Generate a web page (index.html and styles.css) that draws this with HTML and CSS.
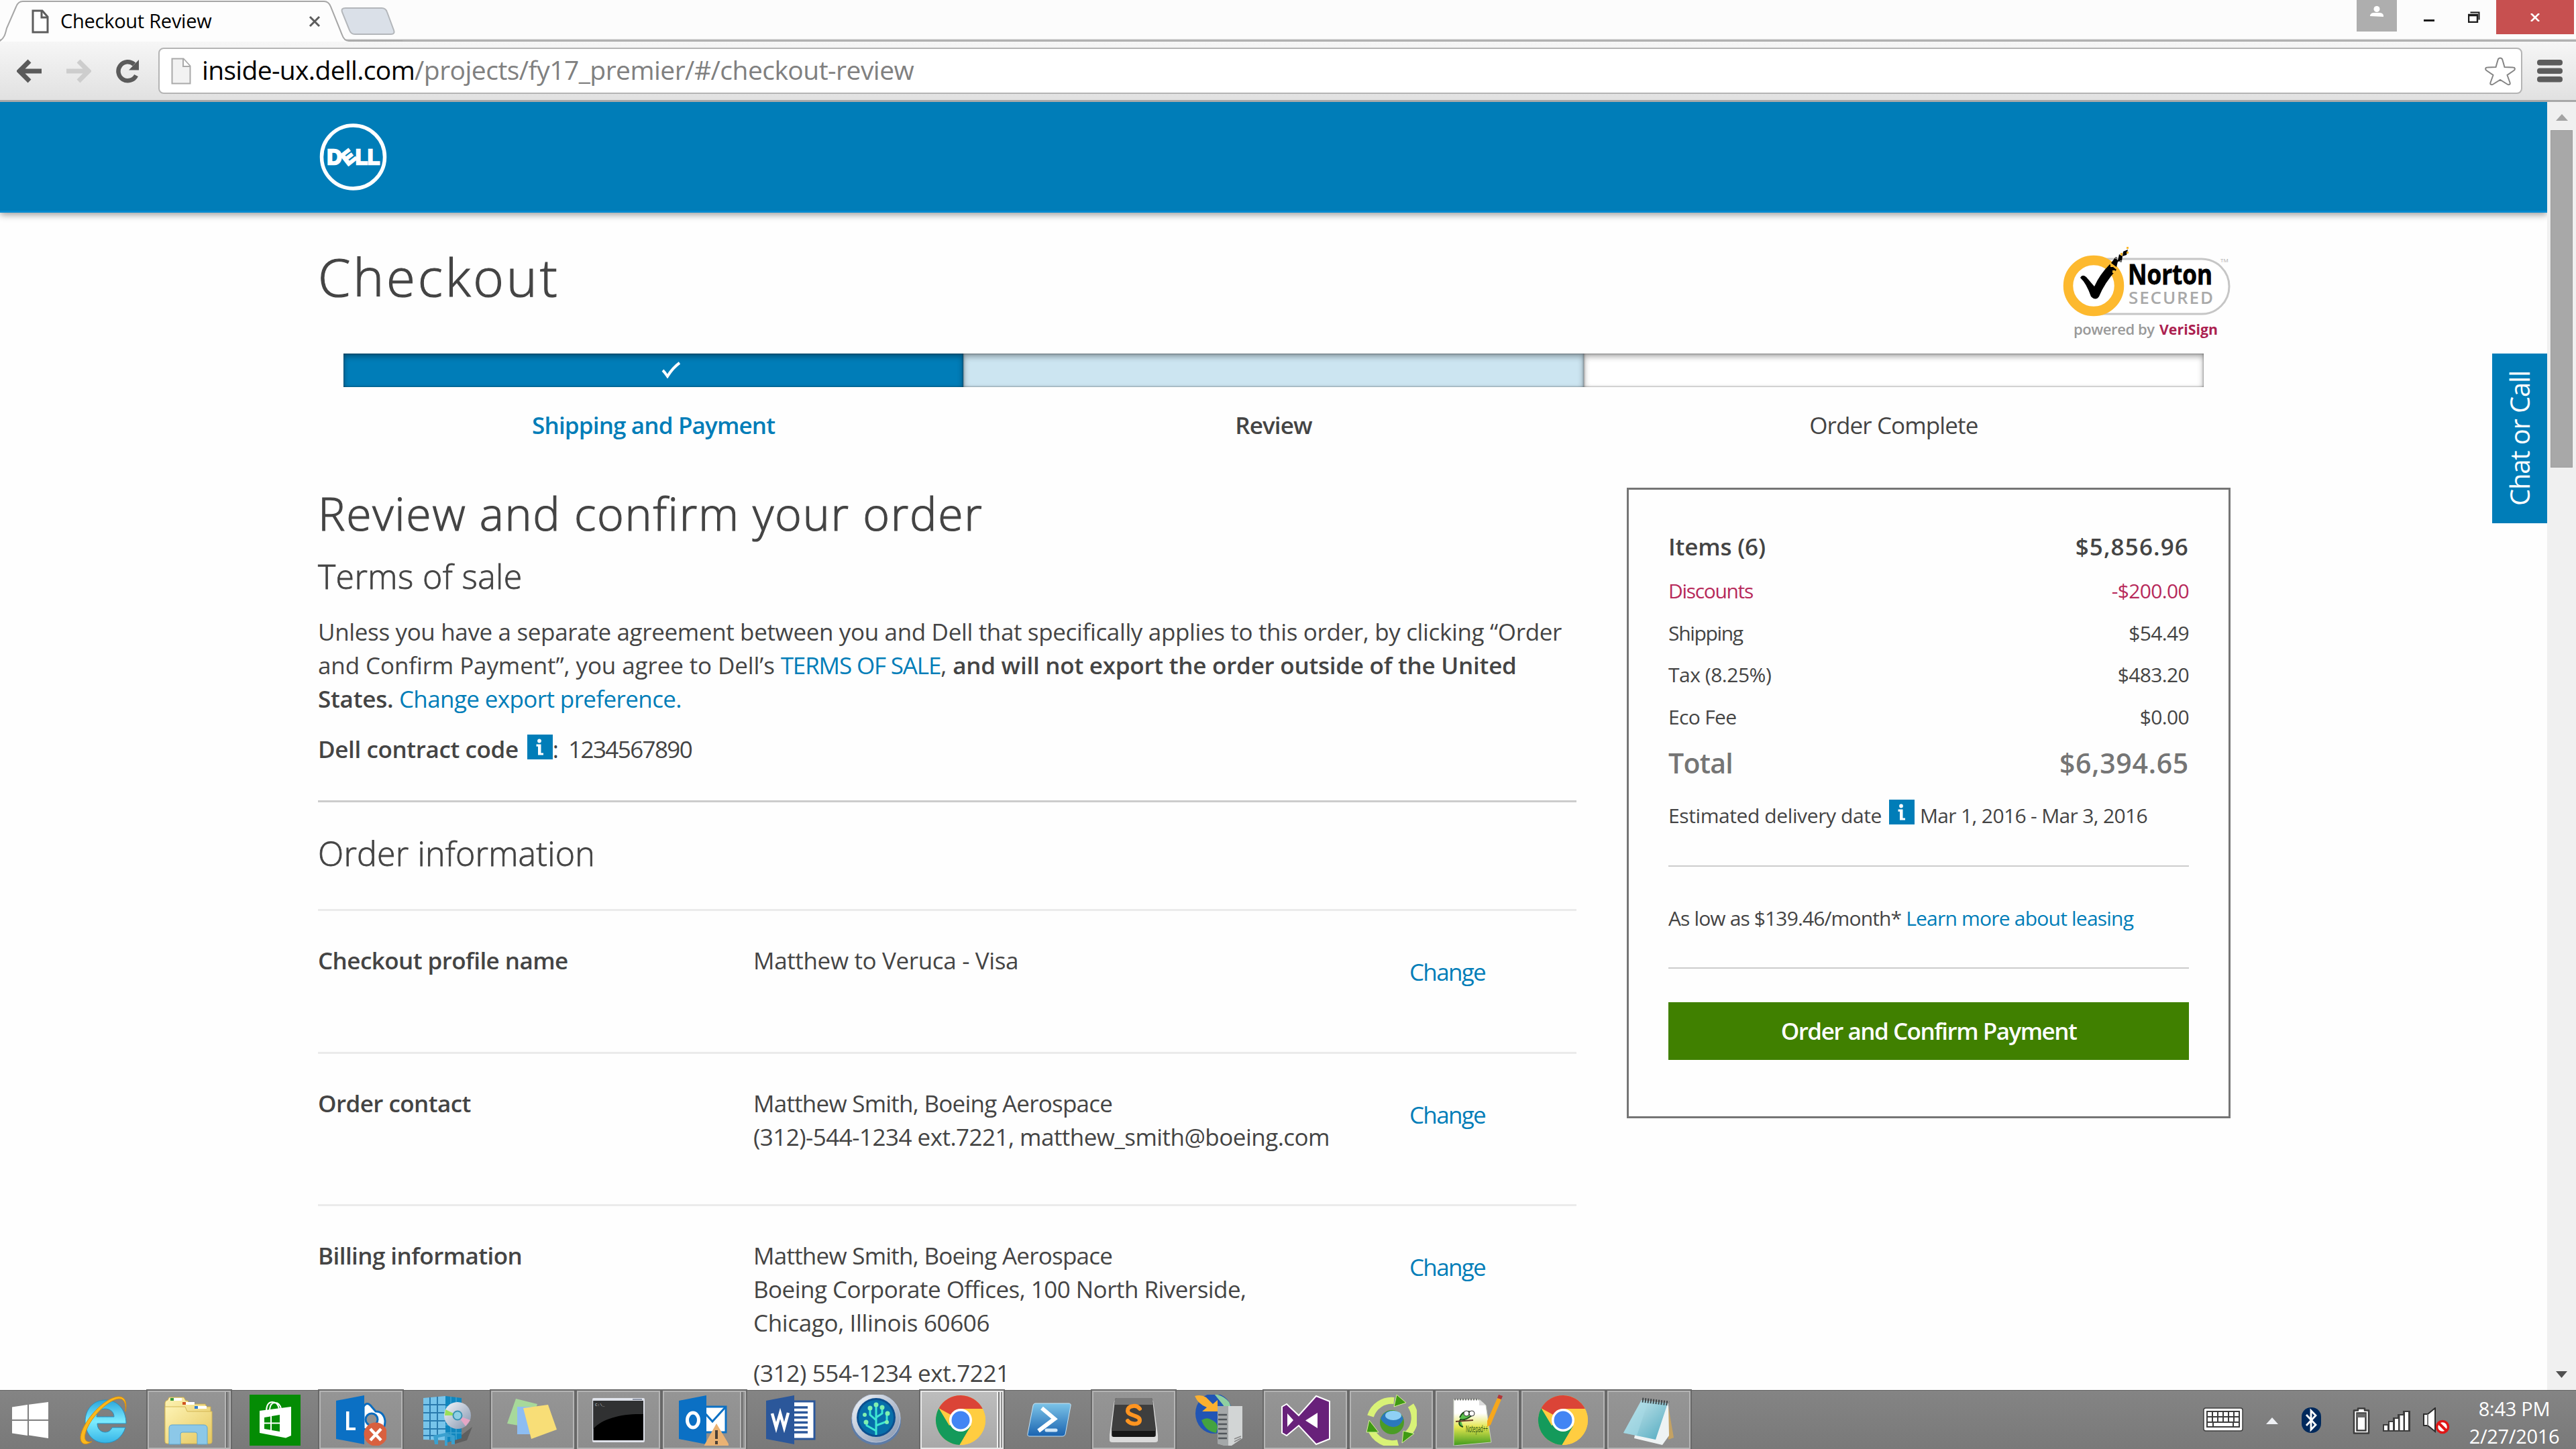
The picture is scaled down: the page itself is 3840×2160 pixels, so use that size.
FILE: index.html
```html
<!DOCTYPE html>
<html lang="en">
<head>
<meta charset="utf-8">
<title>Checkout Review</title>
<link rel="stylesheet" href="styles.css">
</head>
<body>
<svg width="0" height="0" class="defs" aria-hidden="true">
  <defs>
    <linearGradient id="g-ie" x1="0" y1="0" x2="0" y2="1"><stop offset="0" stop-color="#2ba6dc"/><stop offset=".5" stop-color="#7cecff"/><stop offset="1" stop-color="#35b4e6"/></linearGradient>
    <linearGradient id="g-fold" x1="0" y1="0" x2="1" y2="1"><stop offset="0" stop-color="#fdf3b4"/><stop offset="1" stop-color="#e5c75e"/></linearGradient>
    <linearGradient id="g-blue" x1="0" y1="0" x2="0" y2="1"><stop offset="0" stop-color="#7cc4e8"/><stop offset="1" stop-color="#1a63b0"/></linearGradient>
    <linearGradient id="g-silver" x1="0" y1="0" x2="1" y2="1"><stop offset="0" stop-color="#f4f7fb"/><stop offset="1" stop-color="#8292ac"/></linearGradient>
    <linearGradient id="g-note" x1="0" y1="0" x2="1" y2="1"><stop offset="0" stop-color="#d5eef2"/><stop offset="1" stop-color="#4fa9bf"/></linearGradient>
    <linearGradient id="g-npp" x1="0" y1="0" x2="0" y2="1"><stop offset="0" stop-color="#fff"/><stop offset=".3" stop-color="#fff"/><stop offset=".6" stop-color="#e4e64e"/><stop offset="1" stop-color="#3f9a1e"/></linearGradient>
    <linearGradient id="g-arrow" x1="0" y1="0" x2="1" y2="1"><stop offset="0" stop-color="#f2fcae"/><stop offset="1" stop-color="#86c81c"/></linearGradient>
    <symbol id="chrome" viewBox="0 0 76 76">
      <circle cx="38" cy="38" r="37" fill="#ffcd41"/>
      <path d="M38 38 5.500 20.200A37 37 0 0 1 70.800 21H38z" fill="#db4437"/>
      <path d="M5.500 20.200A37 37 0 0 0 36.500 75L53 47 38 38 21 46z" fill="#149a5b"/>
      <path d="M53 47 36.500 75A37 37 0 0 0 70.800 21H38z" fill="#ffcd41"/>
      <circle cx="38" cy="38" r="17" fill="#fff"/>
      <circle cx="38" cy="38" r="13.500" fill="#4285f4"/>
    </symbol>
    <symbol id="info" viewBox="0 0 38 37">
      <rect width="38" height="37" fill="#007db8"/>
      <circle cx="18" cy="9.500" r="2.900" fill="#fff"/>
      <path d="M13.500 14.500h7v13h3.500v3h-8v-12.800h-2.500z" fill="#fff"/>
    </symbol>
  </defs>
</svg>

<div class="tabstrip">
  <svg class="tab-shape" width="600" height="62" viewBox="0 0 600 62">
    <path d="M0 62C7 56 8 50 10 42L24 10Q27 2 34 2H483Q490 2 493 10L510 52Q513 61 520 61V62z" fill="#fdfdfd"/>
    <path d="M0 61C7 56 8 50 10 42L24 10Q27 2 34 2H483Q490 2 493 10L510 52Q513 61 520 61H600" fill="none" stroke="#a6a6a6" stroke-width="2"/>
    <path d="M515 12h54q6 0 8 6l10 27q2 6-4 6h-54q-6 0-8-6l-11-27q-2-6 5-6z" fill="#dae0e8" stroke="#b3b6ba" stroke-width="2"/>
  </svg>
  <div class="tab">
    <svg width="26" height="36" viewBox="0 0 26 36"><path d="M2 2h14l8 9v23H2z" fill="#fff" stroke="#5d5d5d" stroke-width="3"/><path d="M15 2v10h9" fill="none" stroke="#5d5d5d" stroke-width="3"/></svg>
    <span class="tab-title">Checkout Review</span>
    <svg width="18" height="18" viewBox="0 0 18 18"><path d="M2 2l14 14M16 2 2 16" stroke="#5c5c5c" stroke-width="3"/></svg>
  </div>
  <div class="window-controls">
    <span class="user"><svg width="20" height="20" viewBox="0 0 20 20"><circle cx="10" cy="4.500" r="4.500" fill="#fff"/><path d="M0 15v-1q1-4 6-4h8q5 0 6 4v2z" fill="#fff"/></svg></span>
    <svg class="min" width="16" height="3" viewBox="0 0 16 3"><rect width="16" height="3" fill="#1b1b1b"/></svg>
    <svg class="restore" width="18" height="17" viewBox="0 0 18 17"><path d="M3.500 1.500h13v11" fill="none" stroke="#1b1b1b" stroke-width="2"/><path d="M1 5h13v11H1zM1 6h13" fill="none" stroke="#1b1b1b" stroke-width="2.400"/></svg>
    <span class="close"><svg width="14" height="12" viewBox="0 0 14 12"><path d="M1 0l12 12M13 0 1 12" stroke="#fff" stroke-width="2.600"/></svg></span>
  </div>
</div>

<div class="toolbar">
  <svg width="40" height="36" viewBox="0 0 40 36"><path d="M19 3 4 18l15 15M5 18h32" fill="none" stroke="#5a5a5a" stroke-width="7"/></svg>
  <svg class="forward" width="40" height="36" viewBox="0 0 40 36"><path d="M21 3l15 15-15 15M35 18H3" fill="none" stroke="#cdcdcd" stroke-width="7"/></svg>
  <svg class="reload" width="36" height="36" viewBox="0 0 36 36"><path d="M30 24.500A14 14 0 1 1 27 8" fill="none" stroke="#5a5a5a" stroke-width="6.500"/><path d="M34 1v15.500H19z" fill="#5a5a5a"/></svg>
  <div class="urlbar">
    <svg width="30" height="40" viewBox="0 0 30 40"><path d="M1.500 1.500h17l10 11v26h-27z" fill="#f2f2f2" stroke="#a9a9a9" stroke-width="2"/><path d="M18 2v11h10" fill="#fff" stroke="#a9a9a9" stroke-width="2"/></svg>
    <span class="url"><span class="host">inside-ux.dell.com</span><span class="path">/projects/fy17_premier/#/checkout-review</span></span>
    <svg class="star" width="46" height="44" viewBox="0 0 46 44"><path d="M23 2.500c2 0 3 1 3.500 3l3 10.500 12.500.5c3.500 0 3.500 3 1.500 4.500l-10 7 4 11c1 3-1.500 4-4 2.500L23 35l-10.500 6.500c-2.500 1.500-5 .5-4-2.500l4-11-10-7c-2-1.500-2-4.500 1.500-4.500l12.500-.5 3-10.500c.5-2 1.500-3 3.500-3z" fill="#fff" stroke="#858585" stroke-width="2"/></svg>
  </div>
  <svg class="menu" width="38" height="34" viewBox="0 0 38 34"><g fill="#5c5c5c"><rect width="38" height="8.500" rx="4"/><rect y="12.500" width="38" height="8.500" rx="4"/><rect y="25" width="38" height="8.500" rx="4"/></g></svg>
</div>

<div class="viewport">
  <main class="page">
    <header class="masthead">
      <svg width="102" height="102" viewBox="0 0 102 102" class="dell">
        <circle cx="51.500" cy="51" r="47" fill="none" stroke="#fff" stroke-width="5.500"/>
        <g fill="#fff" stroke="#fff" stroke-width="2.600" font-family="Liberation Sans, sans-serif" font-weight="700" font-size="31">
          <text x="12.500" y="62" textLength="22" lengthAdjust="spacingAndGlyphs">D</text>
          <text x="35" y="61" font-size="28" transform="rotate(-38 44 51)" textLength="18" lengthAdjust="spacingAndGlyphs">E</text>
          <text x="55" y="62" textLength="36" lengthAdjust="spacingAndGlyphs">LL</text>
        </g>
      </svg>
    </header>

    <div class="container">
      <div class="title-row">
        <h1>Checkout</h1>
        <svg class="norton" width="262" height="148" viewBox="0 0 262 148">
          <path d="M66 24H219a41 41 0 0 1 0 82H66" fill="#fff" stroke="#c6c6c6" stroke-width="3"/>
          <circle cx="58" cy="64" r="38" fill="#fff" stroke="#fdb92e" stroke-width="14.500"/>
          <path d="M38 52q3-6 9-1l12 14q8-18 23-33l10 8Q74 60 66 80q-5 7-12 0Q47 60 38 52z" fill="#000"/>
          <path d="M84 30l6-8 4 4 2-9 5 3 1-7 7-3-2 8-6 2-1 7-6 1-2 8z" fill="#000"/>
          <path d="M83 32h4v4h-4zM86 41h4v4h-4zM98 15h3v4h-3zM107 6h3v3h-3zM107 13h3v3h-3z" fill="#fdb92e"/>
          <path d="M90 21h3v3h-3zM97 26h3v3h-3z" fill="#777"/>
          <g font-family="Open Sans, sans-serif">
            <text x="109" y="62" font-size="41" font-weight="700" stroke="#000" stroke-width=".8" textLength="126" lengthAdjust="spacingAndGlyphs">Norton</text>
            <text x="110" y="91" font-size="26" font-weight="600" fill="#a9a9a9" textLength="126" lengthAdjust="spacing">SECURED</text>
            <text x="28" y="137" font-size="22" font-weight="600" fill="#999" textLength="121" lengthAdjust="spacing">powered by</text>
            <text x="156" y="137" font-size="22" font-weight="700" fill="#ac2150" textLength="87" lengthAdjust="spacingAndGlyphs">VeriSign</text>
            <text x="247" y="29" font-size="8" fill="#aaa">TM</text>
          </g>
        </svg>
      </div>

      <div class="steps">
        <div class="step done"><div class="bar"><svg width="30" height="26" viewBox="0 0 30 26"><path d="M2 14q3 3 7 9Q17 10 27 3" fill="none" stroke="#fff" stroke-width="4"/></svg></div><span>Shipping and Payment</span></div>
        <div class="step current"><div class="bar"></div><span>Review</span></div>
        <div class="step"><div class="bar"></div><span>Order Complete</span></div>
      </div>

      <div class="columns">
        <section class="details">
          <h2>Review and confirm your order</h2>
          <h3 class="terms-title">Terms of sale</h3>
          <p class="terms"><span class="line1">Unless you have a separate agreement between you and Dell that specifically applies to this order, by clicking “Order</span><br><span class="line2">and Confirm Payment”, you agree to Dell’s <a class="caps">TERMS OF SALE</a>, <b>and will not export the order outside of the United</b></span><br><b>States.</b> <a class="export">Change export preference.</a></p>
          <p class="contract"><b>Dell contract code</b> <svg class="info" width="38" height="37"><use href="#info"/></svg>: <span class="code">1234567890</span></p>
          <h3 class="order-title">Order information</h3>
          <div class="row row-profile">
            <b>Checkout profile name</b>
            <div class="value loose">Matthew to Veruca - Visa</div>
            <a class="change">Change</a>
          </div>
          <div class="row row-contact">
            <b>Order contact</b>
            <div class="value"><span class="name">Matthew Smith, Boeing Aerospace</span><br>(312)-544-1234 ext.7221, matthew_smith@boeing.com</div>
            <a class="change">Change</a>
          </div>
          <div class="row row-billing">
            <b>Billing information</b>
            <div class="value"><span class="name">Matthew Smith, Boeing Aerospace</span><br>Boeing Corporate Offices, 100 North Riverside,<br><span class="loose">Chicago, Illinois 60606</span><p class="loose phone">(312) 554-1234 ext.7221</p></div>
            <a class="change">Change</a>
          </div>
        </section>

        <aside class="summary">
          <div class="sum items"><span>Items (6)</span><span class="amount">$5,856.96</span></div>
          <div class="sum discount"><span class="tight">Discounts</span><span>-$200.00</span></div>
          <div class="sum"><span class="tight">Shipping</span><span>$54.49</span></div>
          <div class="sum"><span class="tax">Tax (8.25%)</span><span>$483.20</span></div>
          <div class="sum"><span>Eco Fee</span><span>$0.00</span></div>
          <div class="sum total"><span>Total</span><span class="amount">$6,394.65</span></div>
          <p class="delivery"><span>Estimated delivery date</span><svg class="info" width="38" height="37"><use href="#info"/></svg><span class="dates">Mar 1, 2016 - Mar 3, 2016</span></p>
          <p class="lease"><span>As low as $139.46/month*</span> <a>Learn more about leasing</a></p>
          <button class="confirm">Order and Confirm Payment</button>
        </aside>
      </div>
    </div>
    <div class="chat"><span>Chat or Call</span></div>
  </main>
  <div class="scrollbar">
    <svg width="18" height="10" viewBox="0 0 18 10"><path d="M0 10 9 0l9 10z" fill="#a3a3a3"/></svg>
    <div class="thumb"></div>
    <svg class="down" width="17" height="10" viewBox="0 0 17 10"><path d="M0 0h17L8.500 10z" fill="#505050"/></svg>
  </div>
</div>

<footer class="taskbar">
  <div class="start"><svg width="54" height="54" viewBox="0 0 54 54"><path d="M0 7.500 23 4v22H0zM25 3.700 54 0v26H25zM0 28h23v22L0 46.500zM25 28h29v26l-29-4.500z" fill="#fff"/></svg></div>
  <div class="app">
    <svg width="76" height="76" viewBox="0 0 76 76"><path d="M41 8c18 0 31 14 31 35H29c0 15 18 17 22 6h20c-5 15-16 23-30 23C23 72 11 58 11 40S23 8 41 8zM28 33h26c0-15-25-17-26 0z" fill="url(#g-ie)" fill-rule="evenodd" stroke="#2492c4" stroke-width="1"/><path d="M71 25C75 5 66-4 44 9 20 24-3 60 6 71c3 4 9 3 15-1-9 2-13-3-9-15C18 37 38 15 54 8c14-6 18 3 17 17z" fill="#fbb81c" stroke="#d98d0c" stroke-width="1"/></svg>
  </div>
  <div class="app open stacked">
    <svg width="76" height="76" viewBox="0 0 76 76"><path d="M4 12q0-3 4-4l2-4h22l3 5h3l2 5h24l2 4h6v50H4z" fill="url(#g-fold)" stroke="#c9ab4e"/><path d="M4 18h30l3 7h37v45q0 3-3 3H7q-3 0-3-3z" fill="url(#g-fold)" stroke="#d3b654"/><path d="M12 5h17v4H12zM30 11h18v4H30zM48 17h18v4H48z" fill="#fff"/><path d="M12 5h5v4h-5z" fill="#3a9b3c"/><path d="M30 11h5v4h-5z" fill="#d0541f"/><path d="M48 17h5v4h-5z" fill="#2f7cd0"/><path d="M10 74V50q0-5 5-5h46q6 0 6 5v24H52V59q0-3-3-3H30q-3 0-3 3v15z" fill="#8cc8e8" stroke="#5fa5cd"/></svg>
  </div>
  <div class="app">
    <svg width="76" height="76" viewBox="0 0 76 76"><rect width="76" height="76" fill="#048c04"/><path d="M15 24 62 18V61L54 64.500 15 57z" fill="#fff"/><path d="M25 23q1-12 9-12t10 10M30 22q1-10 8-10t9 9" fill="none" stroke="#fff" stroke-width="2"/><path d="M22 34l9-1.500v9H22zM33 32l12-2v11.500H33zM22 43.500h9v9L22 51zM33 43.500h12V55l-12-2z" fill="#048c04"/></svg>
  </div>
  <div class="app open">
    <svg width="76" height="76" viewBox="0 0 76 76"><path d="M42 18q5-9 12 0l6 7q12 0 14 14 0 16-13 18l-19-6z" fill="#fff" stroke="#0a6cbf" stroke-width="3"/><circle cx="54" cy="37" r="9" fill="#929292" stroke="#0a6cbf" stroke-width="3"/><path d="M1 9 43 1v73L1 66z" fill="#0b70c4"/><path d="M16 25h4.500v24H30v4H16z" fill="#fff"/><circle cx="60" cy="59" r="17.500" fill="#d9603f"/><path d="M52 51l16 17M68 51 52 68" stroke="#fff" stroke-width="4.500"/></svg>
  </div>
  <div class="app">
    <svg width="76" height="76" viewBox="0 0 76 76"><path d="M50 68 76 48l-8 20-20 6z" fill="#5f5f5f"/><path d="M3 5 36 2v66L3 67z" fill="#77c4ea"/><path d="M36 2 60 5v60L36 72z" fill="#0f86be"/><path d="M3 15h33M3 27h33M3 39h33M3 51h33M3 61h33M13 4v63M24 3v64" stroke="#2a7bae" stroke-width="2"/><path d="M44 3v66M52 4v63M36 18h24M36 32h24M36 45h24M36 57h24" stroke="#3fa3d0" stroke-width="1.500"/><path d="M18 61l18-4 14 4v13l-5 0V63h-6v13h-4V62l-10 2v10h-5z" fill="#3aa0cf"/><circle cx="54" cy="31" r="20" fill="url(#g-silver)"/><path d="M54 31 36 22l-1 9z" fill="#9be05a"/><path d="M54 31 73 38l-7 9z" fill="#e5a6c5"/><circle cx="54" cy="31" r="6.500" fill="#8fd0e4" stroke="#3c93b3" stroke-width="2"/></svg>
  </div>
  <div class="app open">
    <svg width="76" height="76" viewBox="0 0 76 76"><path d="M13 6 45 14 33 49 0 43z" fill="#a7d99a"/><path d="M15 18h38v41H15z" fill="#8dbdf2"/><path d="M24 20 61 15 74 52 36 66z" fill="#f8de77"/></svg>
  </div>
  <div class="app open">
    <svg width="78" height="66" viewBox="0 0 78 66"><rect width="78" height="66" rx="2" fill="#dfe2ea"/><rect x="1.500" y="4" width="74.500" height="59" fill="#000"/><path d="M1.500 4H76v20C45 23 15 30 1.500 46z" fill="#303132"/><path d="M60 2h14" stroke="#8890a0" stroke-width="2"/><text x="4" y="12" font-family="Liberation Mono, monospace" font-size="6" fill="#ccc">C:\_</text></svg>
  </div>
  <div class="app open stacked">
    <svg width="76" height="76" viewBox="0 0 76 76"><rect x="34" y="18" width="38" height="38" fill="#fff" stroke="#0b70c4" stroke-width="3"/><path d="M34 20l18 20 19-21" fill="none" stroke="#0b70c4" stroke-width="3"/><path d="M2 9 43 1v73L2 66z" fill="#0b70c4"/><ellipse cx="23" cy="38" rx="8.500" ry="11" fill="none" stroke="#fff" stroke-width="5"/><path d="M58 43 77 75q1 3-2 3H42q-3 0-2-3z" fill="#eab273"/><path d="M58 53v13M58 69v5" stroke="#4c4036" stroke-width="4"/></svg>
  </div>
  <div class="app">
    <svg width="76" height="76" viewBox="0 0 76 76"><rect x="38" y="10" width="36" height="56" fill="#fff" stroke="#2b579a" stroke-width="3"/><path d="M42 19h22M42 26.500h22M42 34h22M42 41.500h22M42 49h22M42 56h22" stroke="#2b579a" stroke-width="3.500"/><path d="M2 9 44 1v73L2 66z" fill="#2b579a"/><path d="M11 28l6 21 6-21 6 21 6-22" fill="none" stroke="#fff" stroke-width="4.500"/></svg>
  </div>
  <div class="app">
    <svg width="76" height="76" viewBox="0 0 76 76"><path d="M1 34v7a37 34 0 0 0 74 0v-7z" fill="#5d7ca8"/><circle cx="38" cy="35" r="36" fill="url(#g-silver)" stroke="#bcc8de"/><circle cx="38" cy="34" r="29" fill="#0b4f8f"/><circle cx="38" cy="34" r="26" fill="#076faa"/><path d="M38 60V16M38 54l-14-8v-6M38 46l16-6V28M38 38l-9-8v-9M38 34l9-6v-8" fill="none" stroke="#3fe6d2" stroke-width="3"/><g fill="#7ff0b0"><circle cx="38" cy="15" r="3.500"/><circle cx="29" cy="20" r="3.500"/><circle cx="47" cy="19" r="3.500"/><circle cx="55" cy="28" r="3.500"/><circle cx="23" cy="41" r="3.500"/><circle cx="21" cy="30" r="3"/><circle cx="54" cy="41" r="3"/></g></svg>
  </div>
  <div class="app open stacked active">
    <svg width="76" height="76"><use href="#chrome"/></svg>
  </div>
  <div class="app">
    <svg width="76" height="76" viewBox="0 0 76 76"><path d="M19 13h50q4 0 3 4l-8 42q-1 3-4 3H11q-4 0-3-4l8-42q1-3 3-3z" fill="url(#g-blue)" stroke="#c7e4f4" stroke-width="1"/><path d="M29 20 48 36 24 54" fill="none" stroke="#fff" stroke-width="6"/><path d="M36 53h14" stroke="#cfe6f8" stroke-width="5" stroke-linecap="round"/></svg>
  </div>
  <div class="app open">
    <svg width="76" height="76" viewBox="0 0 76 76"><path d="M9 9 2 60v8q0 3 4 3h64q4 0 4-3v-8L67 9z" fill="#dadada"/><path d="M13 5h50q3 0 3 3l5 43v9q0 3-3 3H8q-3 0-3-3v-9L10 8q0-3 3-3z" fill="#3e3e3e"/><path d="M13 5h50q3 0 3 3l1 7H9l1-7q0-3 3-3z" fill="#787878"/><path d="M6 54h64v6q0 3-3 3H9q-3 0-3-3z" fill="#161616"/><path d="M47 21q-4-5-10-4-8 1-8 7c0 8 18 6 18 14 0 7-13 7-18 1" fill="none" stroke="#ff9420" stroke-width="6" stroke-linecap="round"/></svg>
  </div>
  <div class="app">
    <svg width="76" height="76" viewBox="0 0 76 76"><ellipse cx="29.500" cy="28" rx="27.500" ry="30" fill="#2155b4"/><path d="M30-1q14 2 22 12 4 8 3 14-8-2-12-10z" fill="#8fd0a0"/><path d="M11 38q8-5 14-1 10 4 10 12l-2 8q-16-2-22-19z" fill="#44a33f"/><path d="M1 2Q10-1 18 4l10 10 7-6v17H12l7-6Q6 14 1 2z" fill="#fbb030"/><path d="M35 17h37v48L53 78l-18-5z" fill="#d2d5d5"/><path d="M35 17h16v61l-16-5z" fill="#a4a8a9"/><path d="M36 30h13M36 37h13M36 44h13M36 51h13M36 58h13M36 65h13" stroke="#50565a" stroke-width="2.500"/><path d="M60 66l10-4M60 70l10-5" stroke="#888" stroke-width="1.500"/></svg>
  </div>
  <div class="app open">
    <svg width="76" height="76" viewBox="0 0 76 76"><path d="M3 18 10 14 28 31 54 2 74 10V66L54 74 28 46 10 61 3 57z" fill="#68217a" stroke="#fff" stroke-width="2" /><path d="M11 28v20l9-10zM56 27v23L38 38.500z" fill="#fff"/></svg>
  </div>
  <div class="app open">
    <svg width="76" height="76" viewBox="0 0 76 76"><g fill="none" stroke="#d9f277" stroke-width="10"><path d="M7 32A33 33 0 0 1 42 9"/><path d="M67 16a33 33 0 0 1-4 42"/><path d="M48 72A34 34 0 0 1 7 50"/></g><g fill="#3f9a14" stroke="#d8f296" stroke-width="1"><path d="M46 0 60 12 42 18z"/><path d="M56 54l16 4-18 14z"/><path d="M5 38l14 18-18 0z"/></g><circle cx="39" cy="41" r="18" fill="#4b9c26"/><path d="M22 36a18 18 0 0 1 34 0q-6 14-17 12t-17-12z" fill="#2b78bd"/><ellipse cx="41" cy="31" rx="12" ry="7" fill="#8fd0f4"/></svg>
  </div>
  <div class="app open">
    <svg width="76" height="76" viewBox="0 0 76 76"><path d="M3 7h38l10 9 8 55L3 76z" fill="url(#g-npp)" stroke="#c9cfc0"/><path d="M4 7h37" stroke="#777" stroke-width="3" stroke-dasharray="2 2"/><path d="M41 7v9h10z" fill="#ddd"/><path d="M12 34q4-10 13-9 8 1 5 6-10 8-17 6-5 9 4 11" fill="#58c04a" stroke="#1c4c1a" stroke-width="2"/><circle cx="22" cy="28" r="4" fill="#fff" stroke="#333"/><circle cx="30" cy="28" r="4" fill="#fff" stroke="#333"/><path d="M6 40l26-2" stroke="#6a3b2a" stroke-width="2"/><text x="21" y="56" font-family="Open Sans, sans-serif" font-size="15" font-weight="400" fill="#224d12" textLength="33" lengthAdjust="spacingAndGlyphs">Notepad++</text><path d="M53 39 68 5l6 2-16 38-5 3z" fill="#f6a71c"/><path d="M68 5l2-5 6 2-2 5z" fill="#b2353a"/></svg>
  </div>
  <div class="app open">
    <svg width="76" height="76"><use href="#chrome"/></svg>
  </div>
  <div class="app open">
    <svg width="76" height="76" viewBox="0 0 76 76"><path d="M66 12l9 52-8 3z" fill="#c4a263"/><path d="M28 9 67 13l1 48-10 14-42-10z" fill="#eef3f4"/><path d="M27 8 66 13 48 67 0 57z" fill="url(#g-note)"/><path d="M27 8l10 1.500L20 61 0 57z" fill="#a6dbe6" opacity=".6"/><path d="M28 8l40 5" stroke="#3e4548" stroke-width="7" stroke-dasharray="2 2"/></svg>
  </div>
  <div class="tray">
    <svg class="keyboard" width="60" height="36" viewBox="0 0 60 36"><rect x="1" y="1" width="58" height="34" rx="3" fill="#fff" stroke="#3c3c3c" stroke-width="1.500"/><rect x="5" y="5" width="50" height="25" fill="#3c3c3c"/><g fill="#fff"><path d="M7 7h6v6H7zM15 7h6v6h-6zM23 7h6v6h-6zM31 7h6v6h-6zM39 7h6v6h-6zM47 7h6v6h-6zM7 15h6v6H7zM15 15h6v6h-6zM23 15h6v6h-6zM31 15h6v6h-6zM39 15h6v6h-6zM47 15h6v6h-6zM7 23h7v5H7zM16 23h28v5H16zM46 23h7v5h-7z"/></g></svg>
    <svg class="caret" width="18" height="10" viewBox="0 0 18 10"><path d="M0 10 9 0l9 10z" fill="#eef0f4"/></svg>
    <svg class="bluetooth" width="30" height="38" viewBox="0 0 30 38"><rect width="29" height="38" rx="14" fill="#00295c"/><path d="M7 11l14 15-7 7V5l7 7L7 27" fill="none" stroke="#fff" stroke-width="2.800"/></svg>
    <svg class="battery" width="26" height="40" viewBox="0 0 26 40"><path d="M8 1.500h10v3h6v34H2v-34h6z" fill="#fff" stroke="#3c3c3c" stroke-width="2.500" stroke-linejoin="round"/><path d="M6.500 8.500h13v26h-13z" fill="#fff" stroke="#3c3c3c" stroke-width="2.500"/><path d="M6.500 9h13v6h-13z" fill="#6a6a6a"/></svg>
    <svg class="signal" width="41" height="31" viewBox="0 0 41 31"><path d="M0 31V20h8v-5h7v-5h7V5h8V0h11v31z" fill="#3c3c3c"/><path d="M2 22h5v7H2zM10 17h5v12h-5zM18 12h5v17h-5zM25.500 7h5v22h-5zM33 2h5v27h-5z" fill="#fff"/></svg>
    <svg class="speaker" width="40" height="40" viewBox="0 0 40 40"><path d="M1 10h6L18 1v35L7 27H1z" fill="#fff" stroke="#2b2b2b" stroke-width="2"/><path d="M7 10v17" stroke="#777" stroke-width="2"/><circle cx="29" cy="29" r="8.500" fill="#fff" stroke="#e01616" stroke-width="3.500"/><path d="M23 23l12 12" stroke="#e01616" stroke-width="4"/></svg>
    <div class="clock"><span>8:43 PM</span><span class="date">2/27/2016</span></div>
  </div>
</footer>
</body>
</html>
```
FILE: styles.css
```css
* { box-sizing: border-box; }

body {
  margin: 0;
  width: 3840px;
  height: 2160px;
  display: flex;
  flex-direction: column;
  overflow: hidden;
  background: #fefefe;
  color: #444;
  font-family: "Open Sans", "Noto Sans", sans-serif;
  font-size: 35px;
  line-height: 50px;
}

h1, h2, h3, p { margin: 0; font-weight: 300; }
h1, h2 { -webkit-text-stroke: 1.200px #444; }
h3 { -webkit-text-stroke: .800px #444; }
p { font-weight: 400; }
b { font-weight: 600; letter-spacing: -.007em; }
a { color: #007db8; }
svg { display: block; flex: none; }
.defs { position: absolute; }

/* Browser frame */
.tabstrip {
  position: relative;
  height: 62px;
  display: flex;
  justify-content: space-between;
  background: linear-gradient(#fcfcfc 58px, #bdbdbd 59px, #a3a3a3);
}
.tab-shape { position: absolute; left: 0; top: 0; }
.tab {
  position: relative;
  display: flex;
  align-items: center;
  width: 478px;
  height: 64px;
  padding-left: 47px;
}
.tab-title {
  flex: 1;
  margin: -2px 0 0 17px;
  color: #000;
  font-size: 29px;
  letter-spacing: -.009em;
  white-space: nowrap;
}
.window-controls { display: flex; padding-right: 3px; }
.user { width: 60px; height: 47px; padding: 9px 0 0 20px; background: #aeaeae; }
.min { margin: 29px 50px 0 40px; }
.restore { margin: 17px 24px 0 0; }
.close {
  width: 116px;
  height: 51px;
  display: flex;
  align-items: center;
  justify-content: center;
  background: #c75050;
}

.toolbar {
  height: 90px;
  display: flex;
  align-items: flex-start;
  padding: 9px 20px 0 25px;
  background: linear-gradient(#f6f6f6, #e1e1e1);
  border-bottom: 3px solid #a8a8a8;
}
.toolbar > svg { margin-top: 17px; }
.toolbar .forward { margin-left: 31px; }
.toolbar .reload { margin-left: 37px; }
.toolbar .menu { margin: 18px 0 0 22px; }
.urlbar {
  flex: 1;
  height: 69px;
  margin-left: 27px;
  padding: 0 8px 0 17px;
  display: flex;
  align-items: center;
  background: #fff;
  border: 2px solid #b4b4b4;
  border-radius: 8px;
}
.url { flex: 1; margin: -4px 0 0 16px; font-size: 39px; white-space: nowrap; }
.host { color: #000; letter-spacing: -.017em; }
.path { color: #808080; letter-spacing: -.0135em; }

/* Page */
.viewport { height: 1920px; display: flex; }
.page { position: relative; width: 3797px; height: 1920px; overflow: hidden; }
.masthead {
  height: 165px;
  padding: 31px 0 0 475px;
  background: #007db8;
  border-bottom: 3px solid #0089cf;
  box-shadow: 0 3px 10px rgba(0, 0, 0, .4);
}
.container { width: 2851px; margin-left: 474px; }
.title-row { height: 210px; padding-top: 45px; display: flex; justify-content: space-between; }
h1 { font-size: 78px; line-height: 100px; letter-spacing: .049em; }

.steps { display: flex; margin: 0 40px 0 38px; }
.step { flex: 1; text-align: center; letter-spacing: -.025em; }
.step span { display: block; margin-top: 32px; }
.bar {
  height: 50px;
  display: flex;
  justify-content: center;
  padding: 11px 0 0 54px;
  background: #fff;
  box-shadow: inset 0 4px 10px rgba(0, 0, 0, .38), inset 0 0 3px rgba(0, 0, 0, .5);
}
.done .bar { background: #007db8; }
.current .bar { background: #cce5f1; }
.done span { color: #007db8; font-weight: 600; letter-spacing: -.024em; }
.current span { font-weight: 600; }

.columns { display: flex; justify-content: space-between; align-items: flex-start; margin-top: 68px; }
.details { width: 1876px; }
h2 { padding-top: 3px; font-size: 68px; line-height: 70px; letter-spacing: .0255em; }
h3 { font-size: 50px; line-height: 60px; letter-spacing: .004em; }
.terms-title { margin-top: 29px; letter-spacing: .008em; }
.terms { margin-top: 28px; white-space: nowrap; letter-spacing: -.0135em; }
.line1 { letter-spacing: -.010em; }
.line2 { letter-spacing: -.003em; }
.caps { letter-spacing: -.033em; }
.export { letter-spacing: -.0175em; }
.contract { margin-top: 25px; padding-bottom: 51px; border-bottom: 3px solid #ccc; }
.contract b { letter-spacing: -.011em; }
.code { margin-left: 5px; letter-spacing: -.046em; }
.info { display: inline-block; vertical-align: -2px; }
.contract .info { margin-left: 4px; }
.order-title { margin-top: 46px; padding-bottom: 53px; box-sizing: content-box; border-bottom: 3px solid #ebebeb; }
.row { display: grid; grid-template-columns: 649px 978px auto; white-space: nowrap; padding-top: 49px; border-bottom: 3px solid #ebebeb; }
.row b { letter-spacing: -.016em; }
.row-profile { height: 213px; }
.row-contact { height: 227px; }
.value { letter-spacing: -.015em; }
.value .name { letter-spacing: -.0215em; }
.loose { letter-spacing: -.010em; }
.phone { margin-top: 25px; }
.change { padding-top: 17px; letter-spacing: -.048em; }

/* Order summary */
.summary {
  width: 900px;
  height: 940px;
  padding: 60px 59px 0 59px;
  border: 3px solid #757575;
  font-size: 30px;
}
.sum { display: flex; justify-content: space-between; line-height: 62.700px; letter-spacing: -.022em; }
.items { margin-bottom: 10px; font-size: 35px; font-weight: 600; line-height: 50px; letter-spacing: -.005em; }
.items .amount { letter-spacing: .032em; }
.discount { color: #b7295a; }
.tight { letter-spacing: -.044em; }
.tax { letter-spacing: -.016em; }
.total { margin-top: 6px; color: #757575; font-size: 41px; font-weight: 600; line-height: 60px; letter-spacing: -.018em; }
.total .amount { letter-spacing: .018em; }
.delivery { margin-top: 24px; padding-bottom: 49px; border-bottom: 2.500px solid #ccc; letter-spacing: -.0133em; white-space: nowrap; }
.delivery .info { margin: 0 8px 0 11px; }
.dates { letter-spacing: -.0217em; }
.lease { padding: 52px 0 48px; border-bottom: 2.500px solid #ccc; letter-spacing: -.029em; white-space: nowrap; }
.lease a { letter-spacing: -.0263em; }
.confirm {
  display: block;
  width: 100%;
  height: 86px;
  margin-top: 50px;
  padding: 0;
  border: 0;
  background: #408000;
  color: #fff;
  font: 600 35px/50px "Open Sans", "Noto Sans", sans-serif;
  letter-spacing: -.043em;
}

.chat {
  position: absolute;
  right: 0;
  top: 375px;
  width: 82px;
  height: 253px;
  display: flex;
  align-items: center;
  justify-content: center;
  background: #007db8;
  color: #fff;
}
.chat span { writing-mode: vertical-rl; transform: rotate(180deg); font-size: 40px; letter-spacing: -.029em; white-space: nowrap; }

.scrollbar {
  width: 43px;
  display: flex;
  flex-direction: column;
  align-items: center;
  padding: 18px 0;
  background: #f0f0f0;
}
.thumb { width: 33px; height: 503px; margin-top: 14px; background: #a8a8a8; border: 1px solid #9c9c9c; }
.down { margin-top: auto; }

/* Taskbar */
.taskbar {
  height: 88px;
  display: flex;
  gap: 4px;
  background: linear-gradient(#848484, #797979);
  border-top: 1.500px solid #666;
}
.start { width: 88px; padding: 17px 0 0 18px; }
.app { width: 124px; display: flex; align-items: center; justify-content: center; }
.open {
  background: linear-gradient(#959595, #8d8d8d);
  border: 2px solid #b4b4b4;
  outline: 2px solid #686868;
  outline-offset: -.500px;
}
.stacked { padding-right: 4px; box-shadow: inset -3px 0 #8f8f8f, inset -5px 0 #6a6a6a, inset -7px 0 #b4b4b4; }
.active { background: linear-gradient(#bdbdbd, #a8a8a8); border-color: #e8e8e8; box-shadow: inset -2px 0 #8f8f8f, inset -4px 0 #eee, inset -6px 0 #777, inset -8px 0 #eee; }
.tray { position: relative; flex: 1; display: flex; align-items: flex-start; justify-content: flex-end; color: #fff; }
.tray svg { margin-top: 25px; }
.tray .caret { margin: 40px 0 0 34px; }
.tray .bluetooth { margin-left: 35px; }
.tray .battery { margin-left: 46px; }
.tray .signal { margin: 30px 0 0 19px; }
.tray .speaker { margin-left: 19px; }
.clock {
  width: 188px;
  padding: 6px 0 0 4px;
  display: flex;
  flex-direction: column;
  align-items: center;
  font-size: 29px;
  line-height: 41px;
  letter-spacing: -.01em;
}
```
